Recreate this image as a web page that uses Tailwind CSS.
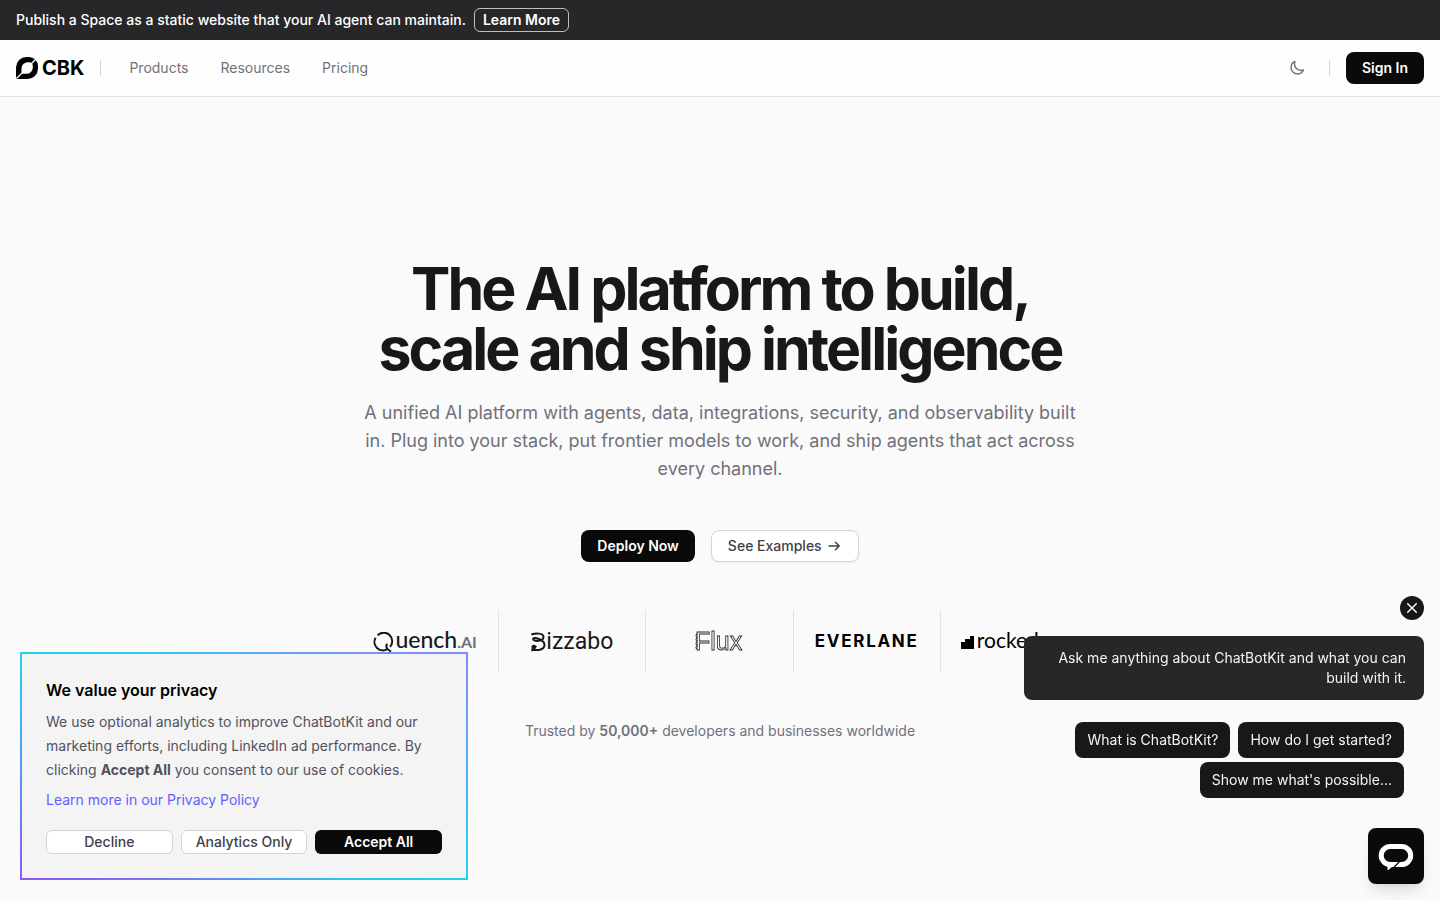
<!DOCTYPE html>
<html lang="en">
  <head>
    <meta charset="UTF-8" />
    <meta name="viewport" content="width=device-width, initial-scale=1.0" />
    <title>ChatBotKit</title>
    <script src="https://cdn.jsdelivr.net/npm/@tailwindcss/browser@4"></script>
  </head>

  <body
    class="bg-[#fafafa] min-h-screen overflow-x-hidden font-[Inter,sans-serif] text-sm text-zinc-900 antialiased"
  >
    <!-- Announcement -->
    <div
      class="flex h-10 items-center gap-2 bg-zinc-800 px-4 font-medium text-white"
    >
      <p>
        Publish a Space as a static website that your AI agent can maintain.
      </p>
      <a
        href="#"
        class="flex h-6 items-center rounded-md border border-white/70 px-2 font-semibold"
        >Learn More</a
      >
    </div>

    <!-- Header -->
    <header
      class="flex h-[57px] items-center justify-between border-b border-zinc-200 bg-[#fefefe] px-4"
    >
      <div class="flex items-center">
        <a href="#" class="flex items-center gap-1 text-black">
          <svg
            class="size-[22px]"
            viewBox="0 0 22 22"
            xmlns="http://www.w3.org/2000/svg"
          >
            <path
              fill="currentColor"
              fill-rule="evenodd"
              d="M0 22V10.500A10.500 10.500 0 0 1 10.500 0H13A9 9 0 0 1 22 9V11.500A10.500 10.500 0 0 1 11.500 22ZM5.500 16.800V11.500A6.300 6.300 0 0 1 11.800 5.200H13A3.800 3.800 0 0 1 16.800 9V10.500A6.300 6.300 0 0 1 10.500 16.800Z"
            />
            <path
              d="M15 7 20.800 1.200M.4 21.600 6.600 15.400"
              stroke="#fefefe"
              stroke-width="1.300"
            />
          </svg>
          <span class="text-xl font-bold">CBK</span>
        </a>
        <div class="ml-4 h-4 w-px bg-zinc-300"></div>
        <nav class="ml-7 flex gap-8 text-zinc-500">
          <a href="#">Products</a>
          <a href="#">Resources</a>
          <a href="#">Pricing</a>
        </nav>
      </div>
      <div class="flex items-center gap-4">
        <button
          type="button"
          aria-label="Toggle theme"
          class="flex size-8 items-center justify-center text-zinc-500"
        >
          <svg
            class="size-4"
            viewBox="0 0 24 24"
            fill="none"
            stroke="currentColor"
            stroke-width="2.100"
            xmlns="http://www.w3.org/2000/svg"
          >
            <path
              stroke-linecap="round"
              stroke-linejoin="round"
              d="M21.752 15.002A9.72 9.72 0 0 1 18 15.750c-5.385 0-9.750-4.365-9.750-9.750 0-1.330.266-2.597.748-3.752A9.753 9.753 0 0 0 3 11.250C3 16.635 7.365 21 12.750 21a9.753 9.753 0 0 0 9.002-5.998Z"
            />
          </svg>
        </button>
        <div class="h-4 w-px bg-zinc-300"></div>
        <a
          href="#"
          class="flex h-8 items-center rounded-lg bg-[#0a0a0a] px-4 font-semibold text-white"
          >Sign In</a
        >
      </div>
    </header>

    <!-- Hero -->
    <main
      class="mx-auto flex max-w-3xl flex-col items-center px-4 pt-[162px] text-center"
    >
      <h1 class="text-[59px] leading-[60px] font-bold tracking-tighter">
        The AI platform to build, scale and ship intelligence
      </h1>
      <p class="mt-5 px-1 text-lg leading-7 text-zinc-500">
        A unified AI platform with agents, data, integrations, security, and
        observability built in. Plug into your stack, put frontier models to
        work, and ship agents that act across every channel.
      </p>
      <div class="mt-[47px] flex gap-4">
        <a
          href="#"
          class="flex h-8 items-center rounded-lg bg-[#0a0a0a] px-4 font-semibold text-white"
          >Deploy Now</a
        >
        <a
          href="#"
          class="flex h-8 items-center gap-1 rounded-lg border border-zinc-300 bg-white px-4 font-medium text-zinc-700 shadow-xs"
        >
          See Examples
          <svg
            class="size-4"
            viewBox="0 0 16 16"
            fill="none"
            stroke="currentColor"
            stroke-width="1.4"
            stroke-linecap="round"
            stroke-linejoin="round"
            xmlns="http://www.w3.org/2000/svg"
          >
            <path d="M3 8h10M9.500 4.200 13.200 8l-3.700 3.800" />
          </svg>
        </a>
      </div>

      <!-- Customers -->
      <div
        class="mt-12 grid h-[63px] w-full grid-cols-5 divide-x divide-zinc-200"
      >
        <div class="flex items-center justify-center">
          <svg
            class="h-5 w-[22px] shrink-0"
            viewBox="0 0 22 20"
            fill="none"
            stroke="#18181b"
            stroke-width="2"
            xmlns="http://www.w3.org/2000/svg"
          >
            <path d="M2.600 5.800A8.400 8.400 0 0 0 14.200 17.200" />
            <path
              d="M4.600 3.400A8.400 8.400 0 0 1 17 14.800M14.200 11.800c-1.800 2.800-.6 4.600 1.200 6l2.600 1.800"
            />
          </svg>
          <span
            class="pb-1 font-[Lato,sans-serif] text-[23px] leading-none font-medium"
            >uench</span
          ><span
            class="font-[Lato,sans-serif] text-base leading-none font-bold text-zinc-500"
            >.AI</span
          >
        </div>
        <div class="flex items-center justify-center">
          <svg
            class="h-5 w-[15px] shrink-0"
            viewBox="0 0 15 20"
            fill="none"
            stroke="#18181b"
            stroke-width="2"
            stroke-linecap="round"
            xmlns="http://www.w3.org/2000/svg"
          >
            <path
              d="M1.200 2.300C4 1.300 12.500.6 12.500 5c0 4-7 4.600-9.500 3.200C1.200 7.200 2.500 5.500 4.500 6c3.500.8 9 2.600 9 6.800 0 5-6 5.600-12 5.200"
            />
            <path
              d="M1.500 14.500c.8-1 2-.7 3.200.2-.7 1.600-2 2.600-3.200 3.300z"
              fill="#18181b"
            />
          </svg>
          <span class="font-[Roboto,sans-serif] text-[23px] leading-6"
            >izzabo</span
          >
        </div>
        <div class="flex items-center justify-center">
          <svg
            class="h-7 w-14 will-change-transform"
            viewBox="0 0 56 28"
            role="img"
            aria-label="Flux"
            xmlns="http://www.w3.org/2000/svg"
          >
            <text
              x="4"
              y="22"
              font-family="Liberation Sans, sans-serif"
              font-size="25"
              fill="#fafafa"
              stroke="#27272a"
              stroke-width=".8"
            >
              Flux
            </text>
            <path
              d="M6 5v1.500H5v2h1v2H5v2h1v2H5v2h1v2H5v2h1"
              fill="none"
              stroke="#27272a"
              stroke-width=".8"
            />
          </svg>
        </div>
        <div
          class="flex items-center justify-center text-[17px] leading-none font-bold tracking-widest text-black"
        >
          EVERLANE
        </div>
        <div class="flex items-center gap-0.5 pl-5 text-black">
          <svg
            class="h-4 w-[14px] shrink-0"
            viewBox="0 0 14 16"
            fill="currentColor"
            xmlns="http://www.w3.org/2000/svg"
          >
            <path d="M0 15V8h4V5h5V2h4v13z" />
          </svg>
          <span
            class="pb-1 font-[Lato,sans-serif] text-[21px] leading-none"
            >rockedu</span
          >
        </div>
      </div>

      <p class="mt-12 text-zinc-500">
        Trusted by <strong class="font-semibold">50,000+</strong> developers and
        businesses worldwide
      </p>
    </main>

    <!-- Cookie consent -->
    <section
      class="fixed bottom-5 left-5 w-[448px] bg-[conic-gradient(from_63deg,#818cf8,#22d3ee_15%,#8b5cf6_50%,#22d3ee_65%,#818cf8)] p-0.5"
      aria-labelledby="privacyTitle"
    >
      <div class="bg-zinc-100 p-6">
        <h2 id="privacyTitle" class="text-base font-semibold text-black">
          We value your privacy
        </h2>
        <p class="mt-2 leading-6 text-zinc-600">
          We use optional analytics to improve ChatBotKit and our marketing
          efforts, including LinkedIn ad performance. By clicking
          <strong class="font-bold">Accept All</strong> you consent to our use
          of cookies.
        </p>
        <a href="#" class="mt-2 block text-indigo-500"
          >Learn more in our Privacy Policy</a
        >
        <div class="mt-5 grid grid-cols-3 gap-2">
          <button
            type="button"
            class="h-6 rounded-md border border-zinc-300 bg-white font-medium text-zinc-700"
          >
            Decline
          </button>
          <button
            type="button"
            class="h-6 rounded-md border border-zinc-300 bg-white font-medium whitespace-nowrap text-zinc-700"
          >
            Analytics Only
          </button>
          <button
            type="button"
            class="h-6 rounded-md bg-[#0a0a0a] font-semibold text-white"
          >
            Accept All
          </button>
        </div>
      </div>
    </section>

    <!-- Chat widget -->
    <aside class="fixed right-4 bottom-4 flex w-[400px] flex-col items-end">
      <button
        type="button"
        aria-label="Close"
        class="flex size-6 items-center justify-center rounded-full bg-zinc-900 text-white"
      >
        <svg
          class="size-4"
          viewBox="0 0 16 16"
          fill="none"
          stroke="currentColor"
          stroke-width="1.400"
          stroke-linecap="round"
          xmlns="http://www.w3.org/2000/svg"
        >
          <path d="m3.700 3.700 8.600 8.600M12.300 3.700l-8.600 8.600" />
        </svg>
      </button>
      <p
        class="mt-4 w-full rounded-lg bg-zinc-800 py-3 pr-[18px] pl-8 text-right text-zinc-100"
      >
        Ask me anything about ChatBotKit and what you can build with it.
      </p>
      <div
        class="mt-[22px] flex flex-wrap justify-end gap-x-2 gap-y-1 pr-5 text-zinc-100"
      >
        <button type="button" class="h-9 rounded-lg bg-zinc-900 px-3">
          What is ChatBotKit?
        </button>
        <button type="button" class="h-9 rounded-lg bg-zinc-900 px-3">
          How do I get started?
        </button>
        <button type="button" class="h-9 rounded-lg bg-zinc-900 px-3">
          Show me what's possible...
        </button>
      </div>
      <button
        type="button"
        aria-label="Open chat"
        class="mt-[30px] flex size-14 items-center justify-center rounded-lg bg-[#0a0a0a] text-white shadow-lg"
      >
        <svg
          class="h-[27px] w-9"
          viewBox="0 0 36 27"
          xmlns="http://www.w3.org/2000/svg"
        >
          <rect
            x="3.200"
            y="3.500"
            width="29.500"
            height="18"
            rx="9"
            fill="none"
            stroke="currentColor"
            stroke-width="5"
          />
          <path d="M9.500 21v6.800l9.500-8.300h-6z" fill="currentColor" />
          <path
            d="M13.500 27 21.500 18.500"
            stroke="#0a0a0a"
            stroke-width="1.300"
          />
        </svg>
      </button>
    </aside>
  </body>
</html>
